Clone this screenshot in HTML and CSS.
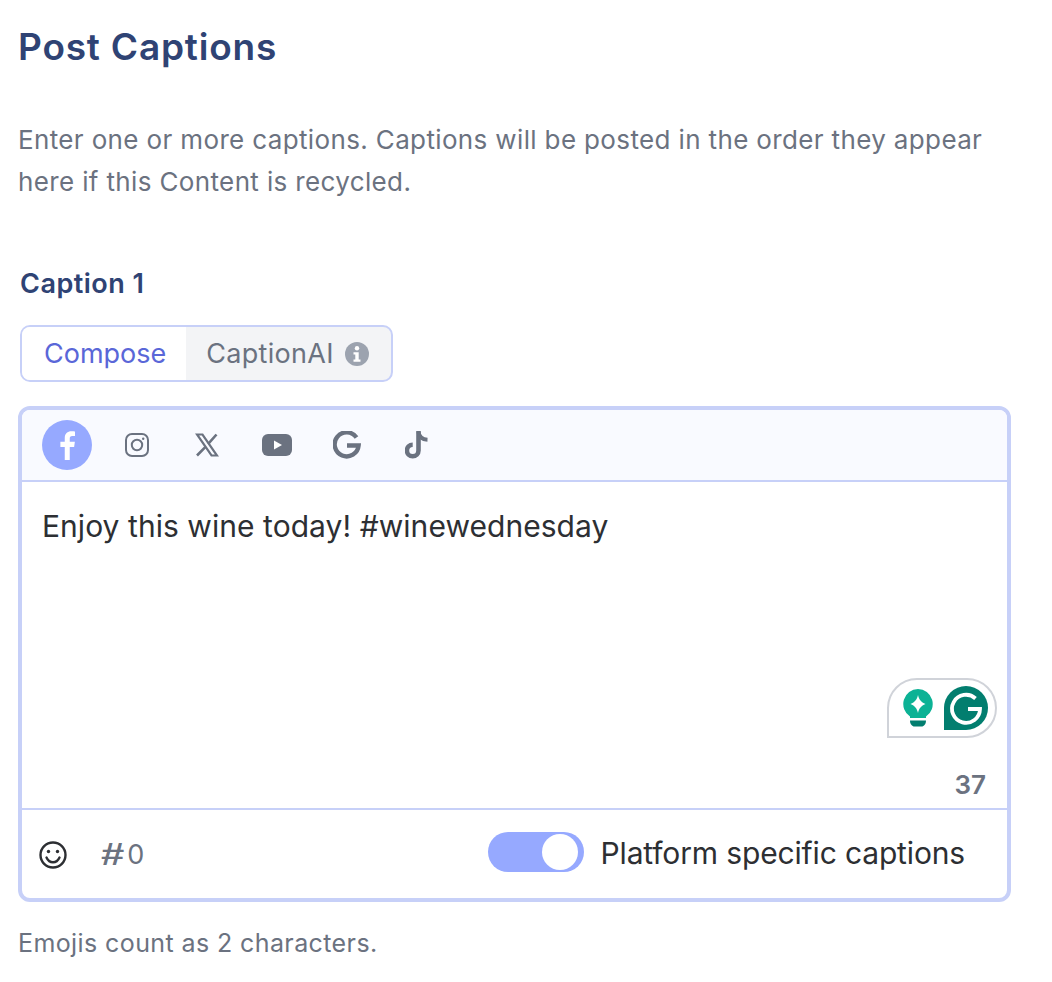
FILE: index.html
```html
<!DOCTYPE html>
<html lang="en">
<head>
    <meta charset="UTF-8">
    <meta name="viewport" content="width=device-width, initial-scale=1.0">
    <title>Post Captions</title>
    <link rel="stylesheet" href="styles.css">
</head>
<body>
    <h1 class="page-title">Post Captions</h1>
    <p class="intro">Enter one or more captions. Captions will be posted in the order they appear here if this Content is recycled.</p>

    <div class="caption-label">Caption 1</div>

    <div class="tabs">
        <div class="tab active">Compose</div>
        <div class="tab">CaptionAI
            <svg class="info-icon" viewBox="0 0 24 24"><circle cx="12" cy="12" r="12" fill="#9ca3af"/><circle cx="12" cy="6.2" r="2.2" fill="#fff"/><path d="M8.5 10.2h5.2v7.2h1.8v2.4h-7v-2.4h1.8v-4.8h-1.8z" fill="#fff"/></svg>
        </div>
    </div>

    <div class="editor">
        <div class="platforms">
            <div class="platform selected">
                <svg class="fb-icon" viewBox="0 0 24 24"><path d="M14.2 24V13.6h3.5l.6-4.2h-4.1V6.8c0-1.2.4-2 2.1-2h2.1V1.1C18 1 16.800.9 15.500.9c-3.100 0-5.300 1.900-5.300 5.400v3.100H6.700v4.200h3.500V24z" fill="#fff"/></svg>
            </div>
            <div class="platform">
                <svg viewBox="0 0 24 24" fill="none" stroke="#6b7280" stroke-width="2"><rect x="1" y="1" width="22" height="22" rx="6"/><circle cx="12" cy="12" r="5.200"/><circle cx="18.200" cy="5.800" r="1.200" fill="#6b7280" stroke="none"/></svg>
            </div>
            <div class="platform">
                <svg viewBox="0 0 24 24" fill="none" stroke="#6b7280" stroke-width="2.200"><path d="M2 1.500h5.500l14.500 21h-5.500z"/><path d="M21.500 1.500l-8.300 9.300M10.500 13.800L2 22.500" stroke-width="2.600"/></svg>
            </div>
            <div class="platform">
                <svg class="yt-icon" viewBox="0 0 30 22"><rect x="0" y="0" width="30" height="22" rx="6" fill="#6b7280"/><path d="M12 6.500l8 4.500-8 4.500z" fill="#fff"/></svg>
            </div>
            <div class="platform">
                <svg class="g-icon" viewBox="0 0 28 28" fill="none" stroke="#6b7280" stroke-width="4.400"><path d="M23.500 6.500A12 12 0 1 0 25.600 14.500H14"/></svg>
            </div>
            <div class="platform">
                <svg class="tt-icon" viewBox="0 0 24 28" fill="none" stroke="#6b7280" stroke-width="4.600"><path d="M13.500 0v19.500a5.800 5.800 0 1 1-5.800-5.800"/><path d="M13.500 1c.5 4.500 3.500 7.500 9 7.700" stroke-width="4"/></svg>
            </div>
        </div>

        <div class="editor-body">
            <div class="caption-text">Enjoy this wine today! #winewednesday</div>
            <div class="grammarly">
                <svg class="bulb" viewBox="0 0 30 38"><path d="M15 0a15 15 0 0 0-8 27.500V29h16v-1.500A15 15 0 0 0 15 0z" fill="#0cb295"/><path d="M15 6c1.200 4.800 3 7 7.500 9-4.500 2-6.300 4.200-7.500 9-1.200-4.800-3-7-7.500-9 4.500-2 6.300-4.200 7.500-9z" fill="#fff"/><path d="M7 31.500h16c0 3.500-2 6-4.500 6h-7C9 37.500 7 35 7 31.500z" fill="#027e6f"/></svg>
                <svg class="g-logo" viewBox="0 0 44 44"><path d="M22 0a22 22 0 0 1 0 44H0V22A22 22 0 0 1 22 0z" fill="#027e6f"/><path d="M31.500 12.500A14 14 0 1 0 36 23H24" fill="none" stroke="#fff" stroke-width="3.800"/></svg>
            </div>
            <div class="char-count">37</div>
        </div>

        <div class="editor-footer">
            <div class="footer-left">
                <svg class="smile" viewBox="0 0 28 28" fill="none" stroke="#2d2f33" stroke-width="2.400"><circle cx="14" cy="14" r="12.500"/><path d="M7.500 16.500c1.500 3.300 3.800 4.800 6.500 4.800s5-1.500 6.500-4.800" stroke-linecap="round"/><circle cx="9.500" cy="10.500" r="1.700" fill="#2d2f33" stroke="none"/><circle cx="18.500" cy="10.500" r="1.700" fill="#2d2f33" stroke="none"/></svg>
                <div class="hash-count"><span class="hash">#</span>0</div>
            </div>
            <div class="footer-right">
                <div class="toggle"><div class="knob"></div></div>
                <span class="toggle-label">Platform specific captions</span>
            </div>
        </div>
    </div>

    <p class="note">Emojis count as 2 characters.</p>
</body>
</html>
```

FILE: styles.css
```css
* {margin: 0; padding: 0; box-sizing: border-box;}
body {font-family: Inter, "Liberation Sans", sans-serif; background-color: #fff; color: #2d2f33; padding: 25px 41px 0 18px;}
.page-title {font-size: 37px; line-height: 44px; font-weight: 600; letter-spacing: 0.8px; color: #2f4374;}
.intro {font-size: 26px; line-height: 42px; letter-spacing: 0.36px; color: #6b7280; margin-top: 50px;}
.caption-label {font-size: 27px; line-height: 34px; font-weight: 600; letter-spacing: 0.5px; color: #2f4374; margin: 64px 0 0 2px;}

.tabs {display: inline-flex; height: 57px; margin: 24px 0 0 2px; border: 2px solid #c7d0f8; border-radius: 10px; background: #f3f4f6; overflow: hidden; vertical-align: top;}
.tab {display: flex; align-items: center; gap: 11px; padding: 0 22px 0 20px; font-size: 27px; letter-spacing: 0.3px; color: #6b7280;}
.tab.active {background: #fff; color: #5a67d8; padding: 0 20px 0 22px; letter-spacing: 0;}
.info-icon {width: 24px; height: 24px;}

.editor {margin-top: 24px; height: 496px; border: 4px solid #c7d0f8; border-radius: 12px; display: flex; flex-direction: column; overflow: hidden;}
.platforms {height: 72px; flex: none; display: flex; align-items: center; gap: 20px; padding-left: 20px; background: #f9faff; border-bottom: 2px solid #c7d0f8;}
.platform {width: 50px; height: 50px; display: flex; align-items: center; justify-content: center;}
.platform svg {width: 24px; height: 24px;}
.platform.selected {background: #96a9ff; border-radius: 50%;}
.platform .fb-icon {width: 30px; height: 30px;}
.platform .yt-icon {width: 30px; height: 22px;}
.platform .g-icon {width: 28px; height: 28px;}
.platform .tt-icon {width: 24px; height: 28px;}

.editor-body {flex: 1; position: relative; padding: 24px 20px 0;}
.caption-text {font-size: 30px; line-height: 40px; letter-spacing: 0.05px;}
.grammarly {position: absolute; right: 10px; top: 196px; width: 110px; height: 60px; border: 2px solid #d0d3d9; border-radius: 30px 30px 30px 0; display: flex; align-items: center; gap: 11px; padding-left: 14px;}
.bulb {width: 30px; height: 38px;}
.g-logo {width: 44px; height: 44px;}
.char-count {position: absolute; right: 21px; bottom: 6px; font-size: 26px; line-height: 34px; font-weight: 600; color: #6b7280;}

.editor-footer {height: 90px; flex: none; display: flex; align-items: center; justify-content: space-between; padding: 0 42px 4px 17px; border-top: 2px solid #c7d0f8;}
.footer-left {display: flex; align-items: center; gap: 34px; margin-top: 6px;}
.smile {width: 28px; height: 28px;}
.hash-count {font-size: 27px; line-height: 34px; color: #6b7280; display: flex; align-items: center; gap: 6px;}
.hash {font-family: "Liberation Sans", sans-serif; font-weight: 700; font-size: 31px; transform: scaleX(1.35); margin-left: 3px;}
.footer-right {display: flex; align-items: center; gap: 17px;}
.toggle {width: 96px; height: 40px; border-radius: 20px; background: #96a9ff; padding: 2px 6px 2px 2px; display: flex; justify-content: flex-end;}
.knob {width: 36px; height: 36px; border-radius: 50%; background: #fff;}
.toggle-label {font-size: 30px; letter-spacing: -0.15px; margin-top: 2px;}

.note {font-size: 25px; line-height: 32px; letter-spacing: 0.4px; color: #6b7280; margin-top: 25px;}
```
